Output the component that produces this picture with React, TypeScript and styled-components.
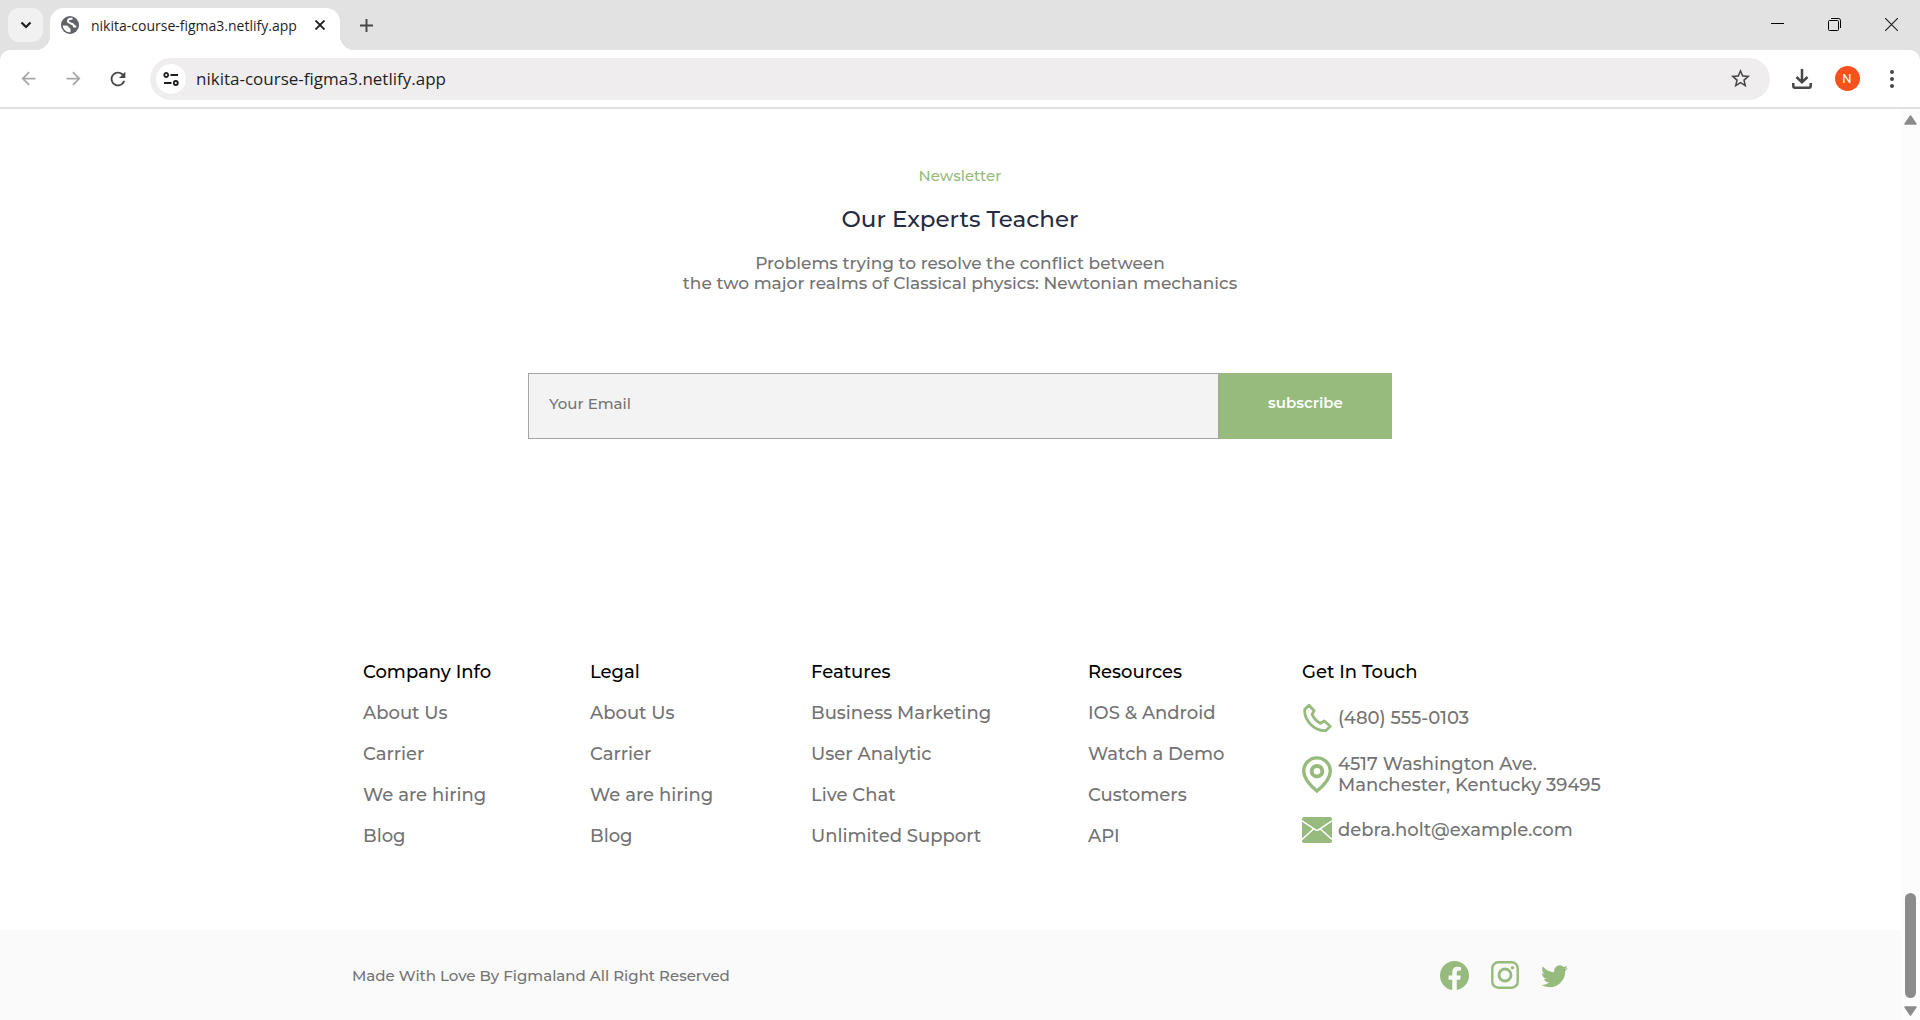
import React from "react";
import styled, { createGlobalStyle } from "styled-components";
import { MdArrowBack, MdArrowForward, MdRefresh, MdStarBorder } from "react-icons/md";
import { BsFacebook, BsTwitter } from "react-icons/bs";

const GREEN = "#96bb7c";
const GREY = "#737373";
const UI_FONT = '"Segoe UI", "Open Sans", "Noto Sans", sans-serif';

const GlobalStyle = createGlobalStyle`
  *, *::before, *::after { box-sizing: border-box; }
  body { margin: 0; background: #fff; font-family: Montserrat, Inter, sans-serif; font-weight: 500; }
  h2, h3, p, ul { margin: 0; padding: 0; }
  ul { list-style: none; }
  button, input { font: inherit; }
  button { border: 0; padding: 0; background: none; cursor: pointer; }
  a { color: inherit; text-decoration: none; }
  svg { display: block; flex: none; }
`;

const Window = styled.div`
  display: flex;
  flex-direction: column;
  min-height: 100vh;
`;

/* Browser frame */
const TabStrip = styled.div`
  display: flex;
  align-items: flex-end;
  height: 50px;
  padding-left: 8px;
  background: #e2e2e2;
  font-family: ${UI_FONT};
  font-weight: 400;
`;

const TabSearch = styled.button`
  display: grid;
  place-items: center;
  width: 35px;
  height: 34px;
  margin: 0 7px 8px 0;
  border-radius: 11px;
  background: #f1f1f1;
`;

const Tab = styled.div`
  position: relative;
  display: flex;
  align-items: center;
  gap: 11px;
  width: 290px;
  height: 42px;
  padding: 0 12px 8px 10px;
  border-radius: 14px 14px 0 0;
  background: #fff;
  font-size: 14px;
  color: #1f1f1f;

  &::before,
  &::after {
    content: "";
    position: absolute;
    bottom: 0;
    width: 14px;
    height: 14px;
  }
  &::before {
    right: 100%;
    background: radial-gradient(circle at 0 0, transparent 14px, #fff 14px);
  }
  &::after {
    left: 100%;
    background: radial-gradient(circle at 100% 0, transparent 14px, #fff 14px);
  }
`;

const TabTitle = styled.span`
  flex: 1;
  white-space: nowrap;
`;

const TabClose = styled.button`
  display: grid;
  place-items: center;
  width: 16px;
  height: 16px;
`;

const NewTab = styled.button`
  display: grid;
  place-items: center;
  width: 34px;
  height: 34px;
  margin: 0 auto 8px 9px;
`;

const WindowButton = styled.button`
  display: grid;
  place-items: center;
  width: 57px;
  height: 48px;
  align-self: flex-start;
`;

const ToolbarBack = styled.div`
  background: #e2e2e2;
`;

const Toolbar = styled.div`
  display: flex;
  align-items: center;
  height: 59px;
  padding: 0 8px;
  border-bottom: 2px solid #e0e0e0;
  border-radius: 10px 10px 0 0;
  background: #fff;
`;

const ToolGroup = styled.div`
  display: flex;
  gap: 5px;
`;

const ToolButton = styled.button<{ $faded?: boolean }>`
  display: grid;
  place-items: center;
  width: 40px;
  height: 40px;
  color: ${(p) => (p.$faded ? "#a6a6a6" : "#474747")};
`;

const AddressBar = styled.div`
  display: flex;
  align-items: center;
  flex: 1;
  height: 42px;
  margin: 0 12px;
  padding: 0 10px 0 6px;
  border-radius: 21px;
  background: #efedee;
`;

const SiteInfo = styled.button`
  display: grid;
  place-items: center;
  width: 30px;
  height: 30px;
  border-radius: 50%;
  background: #fff;
`;

const Address = styled.input`
  flex: 1;
  padding: 0 10px;
  border: 0;
  outline: 0;
  background: none;
  font-family: ${UI_FONT};
  font-size: 17px;
  font-weight: 400;
  color: #1f1f1f;
`;

const Avatar = styled.span`
  display: grid;
  place-items: center;
  width: 25px;
  height: 25px;
  border-radius: 50%;
  background: #f8511d;
  color: #fff;
  font: 400 13px Roboto, sans-serif;
`;

/* Page */
const Viewport = styled.div`
  position: relative;
  flex: 1;
  display: flex;
  flex-direction: column;
`;

const Scrollbar = styled.div`
  position: absolute;
  inset: 0 0 0 auto;
  display: flex;
  flex-direction: column;
  align-items: center;
  width: 19px;
  padding: 6px 0 4px;
  background: #fcfcfc;
`;

const Thumb = styled.div`
  width: 11px;
  height: 105px;
  margin: auto 0 8px;
  border-radius: 6px;
  background: #8b8b8b;
`;

const Newsletter = styled.section`
  display: flex;
  flex-direction: column;
  align-items: center;
  padding-top: 56px;
  text-align: center;
`;

const Eyebrow = styled.p`
  font-size: 15px;
  line-height: 22px;
  color: ${GREEN};
`;

const Title = styled.h2`
  margin: 16px 0 18px;
  font-size: 23px;
  line-height: 32px;
  font-weight: 500;
  color: #252b42;
`;

const Lead = styled.p`
  font-size: 17px;
  line-height: 20px;
  color: ${GREY};
`;

const SubscribeForm = styled.form`
  display: flex;
  width: 45%;
  height: 66px;
  margin-top: 80px;
`;

const Email = styled.input`
  flex: 1;
  min-width: 0;
  padding: 0 20px 6px;
  border: 1px solid #a5a5a5;
  border-radius: 0;
  background: #f3f3f3;
  font-size: 15px;
  &::placeholder { color: ${GREY}; opacity: 1; }
`;

const Subscribe = styled.button`
  width: 173px;
  padding-bottom: 8px;
  background: ${GREEN};
  color: #fff;
  font-size: 15px;
  font-weight: 600;
`;

const FooterLinks = styled.footer`
  display: grid;
  grid-template-columns:
    minmax(0, 227fr) minmax(0, 221fr) minmax(0, 277fr)
    minmax(0, 214fr) minmax(0, 295fr);
  width: 100%;
  max-width: 1274px;
  margin: auto auto 83px;
  padding-left: 40px;
  font-size: 18px;
  line-height: 21px;
  color: ${GREY};
  white-space: nowrap;
`;

const Column = styled.div`
  display: flex;
  flex-direction: column;
  gap: 20px;
`;

const LinkList = styled.ul`
  display: grid;
  gap: 20px;
`;

const ColumnTitle = styled.h3`
  font-size: 18px;
  font-weight: 500;
  color: #000;
`;

const ContactList = styled.ul`
  display: grid;
  gap: 21px;
`;

const Contact = styled.li`
  display: flex;
  align-items: center;
  gap: 6px;
`;

const BottomBar = styled.div`
  background: #fafafa;
`;

const BottomInner = styled.div`
  display: flex;
  align-items: center;
  justify-content: space-between;
  max-width: 1216px;
  height: 90px;
  margin: 0 auto;
  font-size: 15px;
  color: ${GREY};
`;

const Socials = styled.div`
  display: flex;
  align-items: center;
  gap: 22px;
  color: ${GREEN};
`;

const columns = [
  { title: "Company Info", links: ["About Us", "Carrier", "We are hiring", "Blog"] },
  { title: "Legal", links: ["About Us", "Carrier", "We are hiring", "Blog"] },
  { title: "Features", links: ["Business Marketing", "User Analytic", "Live Chat", "Unlimited Support"] },
  { title: "Resources", links: ["IOS & Android", "Watch a Demo", "Customers", "API"] },
];

const GlobeIcon = () => (
  <svg width="20" height="20" viewBox="0 0 20 20">
    <circle cx="10" cy="10" r="9" fill="#5f6368" />
    <path d="M2.800 10.500h4.400l3.300 3.200v3.600C6 17.500 3 14.500 2.800 10.500Z" fill="#fff" />
    <path d="M12.500 3.800H10.200Q7.800 4.200 8 6.800L10.800 8.600Q13.800 9 14 11.500H16.300" fill="none" stroke="#fff" strokeWidth="2" />
  </svg>
);

const PhoneIcon = () => (
  <svg width="30" height="30" viewBox="0 0 30 30" fill="none" stroke={GREEN} strokeWidth="2.800" strokeLinejoin="round">
    <path d="M7 2.200 2.800 6.300C2.200 11 4 16.500 8.500 21.200 13 25.800 18.500 28 24 27.500L28.300 23.200 22.300 18 18.600 20.300C15.500 19.300 11.300 14.800 10.100 11.300L12.200 7.700Z" />
  </svg>
);

const PinIcon = () => (
  <svg width="30" height="38" viewBox="0 0 30 38" fill="none" stroke={GREEN}>
    <path strokeWidth="3.400" d="M15 35C10.500 31.300 1.700 23.500 1.700 15.200a13.300 13.300 0 0 1 26.600 0C28.300 23.500 19.500 31.300 15 35Z" />
    <circle cx="15" cy="15.200" r="5.300" strokeWidth="4" />
  </svg>
);

const MailIcon = () => (
  <svg width="30" height="26" viewBox="0 0 30 26">
    <rect width="30" height="26" rx="2" fill={GREEN} />
    <path d="M0 3.800 13.200 12.600Q15 14 16.800 12.600L30 3.800M0 22.500 11.500 12M30 22.500 18.500 12" fill="none" stroke="#fff" strokeWidth="1.600" />
  </svg>
);

const InstagramIcon = () => (
  <svg width="28" height="28" viewBox="0 0 28 28" fill="none" stroke={GREEN}>
    <rect x="1.300" y="1.300" width="25.400" height="25.400" rx="6" strokeWidth="2.400" />
    <circle cx="14" cy="14" r="6" strokeWidth="2.800" />
    <circle cx="21.500" cy="6.700" r="1.700" fill={GREEN} stroke="none" />
  </svg>
);

const ScrollArrow = ({ down }: { down?: boolean }) => (
  <svg width="13" height="10" viewBox="0 0 13 10" fill="#8b8b8b" stroke="#8b8b8b" strokeWidth="1.500" strokeLinejoin="round">
    <path d={down ? "M1 1h11L6.500 9Z" : "M1 9h11L6.500 1Z"} />
  </svg>
);

export default function App() {
  return (
    <Window>
      <GlobalStyle />
      <TabStrip>
        <TabSearch aria-label="Search tabs">
          <svg width="12" height="8" viewBox="0 0 12 8" fill="none" stroke="#1f1f1f" strokeWidth="2.200">
            <path d="m1.500 1.500 4.500 4.500 4.500-4.500" />
          </svg>
        </TabSearch>
        <Tab>
          <GlobeIcon />
          <TabTitle>nikita-course-figma3.netlify.app</TabTitle>
          <TabClose aria-label="Close tab">
            <svg width="10" height="10" viewBox="0 0 10 10" stroke="#1f1f1f" strokeWidth="1.900">
              <path d="m.5.5 9 9m0-9-9 9" />
            </svg>
          </TabClose>
        </Tab>
        <NewTab aria-label="New tab">
          <svg width="13" height="13" viewBox="0 0 13 13" stroke="#474747" strokeWidth="1.900">
            <path d="M6.500 0v13M0 6.500h13" />
          </svg>
        </NewTab>
        <WindowButton aria-label="Minimize">
          <svg width="13" height="13" viewBox="0 0 13 13" stroke="#000"><path d="M0 5.500h13" /></svg>
        </WindowButton>
        <WindowButton aria-label="Restore">
          <svg width="13" height="13" viewBox="0 0 13 13" fill="none" stroke="#000">
            <rect x=".5" y="2.500" width="10" height="10" rx="1" />
            <path d="M3 .5h7.500q2 0 2 2V10" />
          </svg>
        </WindowButton>
        <WindowButton aria-label="Close window">
          <svg width="13" height="13" viewBox="0 0 13 13" stroke="#222" strokeWidth="1.200"><path d="m0 0 13 13m0-13L0 13" /></svg>
        </WindowButton>
      </TabStrip>

      <ToolbarBack>
        <Toolbar>
          <ToolGroup>
            <ToolButton $faded aria-label="Back"><MdArrowBack size={21} /></ToolButton>
            <ToolButton $faded aria-label="Forward"><MdArrowForward size={21} /></ToolButton>
            <ToolButton aria-label="Reload"><MdRefresh size={22} /></ToolButton>
          </ToolGroup>
          <AddressBar>
            <SiteInfo aria-label="Site information">
              <svg width="16" height="14" viewBox="0 0 16 14" fill="none" stroke="#1f1f1f" strokeWidth="1.800">
                <circle cx="3.200" cy="3" r="2" />
                <path d="M7.500 3H15M1 11h7.500" />
                <circle cx="12.800" cy="11" r="2" />
              </svg>
            </SiteInfo>
            <Address aria-label="Address" defaultValue="nikita-course-figma3.netlify.app" />
            <ToolButton aria-label="Bookmark"><MdStarBorder size={23} /></ToolButton>
          </AddressBar>
          <ToolGroup>
            <ToolButton aria-label="Downloads">
              <svg width="20" height="20" viewBox="0 0 20 20" fill="none" stroke="#474747" strokeWidth="2.500">
                <path d="M10 0v13M4.500 8l5.500 5.300L15.500 8M1.300 14v3q0 1.700 1.700 1.700h14q1.700 0 1.700-1.700V14" />
              </svg>
            </ToolButton>
            <ToolButton aria-label="Profile"><Avatar>N</Avatar></ToolButton>
            <ToolButton aria-label="Menu">
              <svg width="4" height="18" viewBox="0 0 4 18" fill="#474747">
                <circle cx="2" cy="2" r="2" /><circle cx="2" cy="9" r="2" /><circle cx="2" cy="16" r="2" />
              </svg>
            </ToolButton>
          </ToolGroup>
        </Toolbar>
      </ToolbarBack>

      <Viewport>
        <Newsletter>
          <Eyebrow>Newsletter</Eyebrow>
          <Title>Our Experts Teacher</Title>
          <Lead>
            Problems trying to resolve the conflict between
            <br />
            the two major realms of Classical physics: Newtonian mechanics
          </Lead>
          <SubscribeForm onSubmit={(e) => e.preventDefault()}>
            <Email type="email" aria-label="Your Email" placeholder="Your Email" />
            <Subscribe type="submit">subscribe</Subscribe>
          </SubscribeForm>
        </Newsletter>

        <FooterLinks>
          {columns.map((column) => (
            <Column key={column.title}>
              <ColumnTitle>{column.title}</ColumnTitle>
              <LinkList>
                {column.links.map((link) => (
                  <li key={link}><a href="#">{link}</a></li>
                ))}
              </LinkList>
            </Column>
          ))}
          <Column>
            <ColumnTitle>Get In Touch</ColumnTitle>
            <ContactList>
              <Contact><PhoneIcon /><a href="tel:4805550103">(480) 555-0103</a></Contact>
              <Contact><PinIcon /><span>4517 Washington Ave.<br />Manchester, Kentucky 39495</span></Contact>
              <Contact><MailIcon /><a href="mailto:debra.holt@example.com">debra.holt@example.com</a></Contact>
            </ContactList>
          </Column>
        </FooterLinks>

        <BottomBar>
          <BottomInner>
            <p>Made With Love By Figmaland All Right Reserved</p>
            <Socials>
              <a href="#" aria-label="Facebook"><BsFacebook size={29} /></a>
              <a href="#" aria-label="Instagram"><InstagramIcon /></a>
              <a href="#" aria-label="Twitter"><BsTwitter size={27} /></a>
            </Socials>
          </BottomInner>
        </BottomBar>

        <Scrollbar aria-hidden="true">
          <ScrollArrow />
          <Thumb />
          <ScrollArrow down />
        </Scrollbar>
      </Viewport>
    </Window>
  );
}
